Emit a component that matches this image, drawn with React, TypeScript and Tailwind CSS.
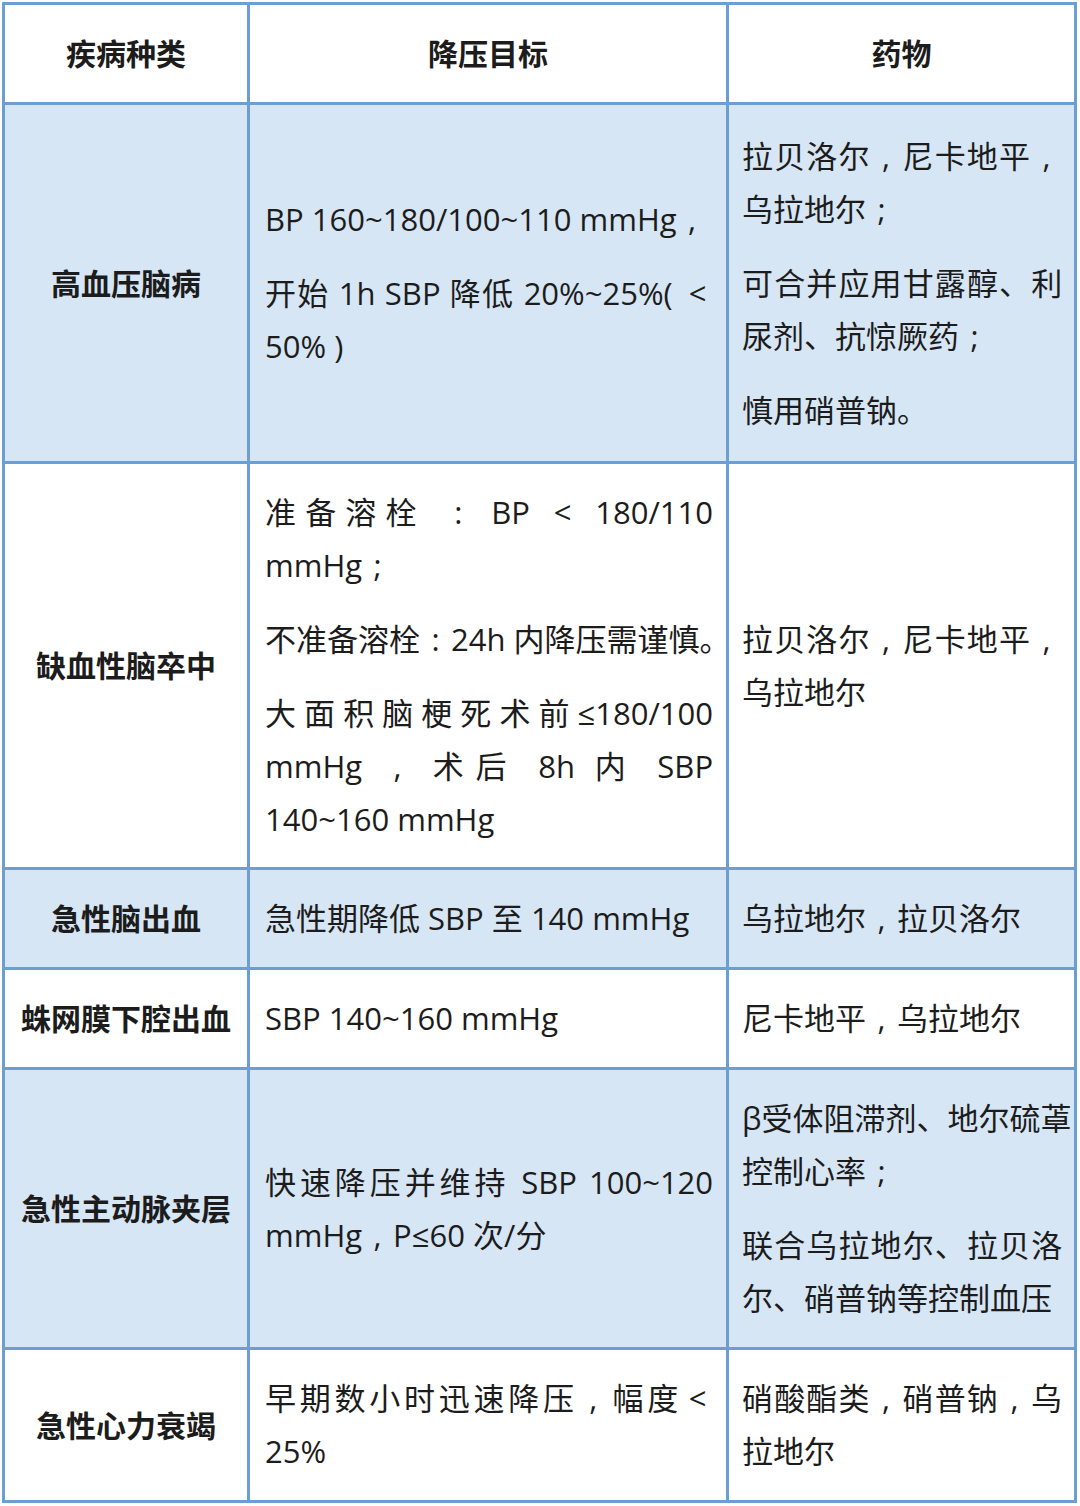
import React from 'react';

type Row = {
  h: number;
  shaded: boolean;
  name: string;
  target: string[][];
  drug: string[][];
};

const rows: Row[] = [
  {
    h: 359,
    shaded: true,
    name: '高血压脑病',
    target: [['BP 160~180/100~110 mmHg，'], ['开始 1h SBP 降低 20%~25%( ＜', '50% )']],
    drug: [['拉贝洛尔，尼卡地平，', '乌拉地尔；'], ['可合并应用甘露醇、利', '尿剂、抗惊厥药；'], ['慎用硝普钠。']],
  },
  {
    h: 406,
    shaded: false,
    name: '缺血性脑卒中',
    target: [
      ['准备溶栓 ： BP ＜ 180/110', 'mmHg；'],
      ['不准备溶栓：24h 内降压需谨慎。'],
      ['大面积脑梗死术前≤180/100', 'mmHg ， 术后 8h 内 SBP', '140~160 mmHg'],
    ],
    drug: [['拉贝洛尔，尼卡地平，', '乌拉地尔']],
  },
  {
    h: 100,
    shaded: true,
    name: '急性脑出血',
    target: [['急性期降低 SBP 至 140 mmHg']],
    drug: [['乌拉地尔，拉贝洛尔']],
  },
  {
    h: 100,
    shaded: false,
    name: '蛛网膜下腔出血',
    target: [['SBP 140~160 mmHg']],
    drug: [['尼卡地平，乌拉地尔']],
  },
  {
    h: 280,
    shaded: true,
    name: '急性主动脉夹层',
    target: [['快速降压并维持 SBP 100~120', 'mmHg，P≤60 次/分']],
    drug: [['β受体阻滞剂、地尔硫䓬', '控制心率；'], ['联合乌拉地尔、拉贝洛', '尔、硝普钠等控制血压']],
  },
  {
    h: 153,
    shaded: false,
    name: '急性心力衰竭',
    target: [['早期数小时迅速降压，幅度＜', '25%']],
    drug: [['硝酸酯类，硝普钠，乌', '拉地尔']],
  },
];

// fullwidth marks drawn centred in their em box, as in the source
const marks: Record<string, string> = { '，': ',', '；': ';', '：': ':', '＜': '<' };

function Line({ text }: { text: string }) {
  return (
    <>
      {Array.from(text).map((ch, i) =>
        marks[ch] ? (
          <span key={i} className="inline-block w-[1em] text-center [text-align-last:center]">
            {marks[ch]}
          </span>
        ) : (
          ch
        ),
      )}
    </>
  );
}

function Paras({ paras }: { paras: string[][] }) {
  return (
    <>
      {paras.map((lines, i) => (
        <div key={i} className={i > 0 ? 'mt-[21px]' : ''}>
          {lines.map((l, j) => (
            <div
              key={j}
              className={
                j < lines.length - 1
                  ? 'whitespace-nowrap text-justify [text-align-last:justify]'
                  : 'whitespace-nowrap'
              }
            >
              <Line text={l} />
            </div>
          ))}
        </div>
      ))}
    </>
  );
}

export default function App() {
  return (
    <div
      className="w-[1080px] h-[1506px] bg-white pl-[2px] pt-[2px] text-[#1c1c1c]"
      style={{ fontFamily: '"Open Sans", "Noto Sans CJK SC", sans-serif' }}
    >
      <div className="w-[1075px] border-l-[3px] border-t-[3px] border-[#6b9fd3]">
        <div className="flex h-[100px] bg-white text-[30px] font-bold">
          <div className="w-[245px] flex items-center justify-center border-r-[3px] border-b-[3px] border-[#6b9fd3]">疾病种类</div>
          <div className="w-[479px] flex items-center justify-center border-r-[3px] border-b-[3px] border-[#6b9fd3]">降压目标</div>
          <div className="w-[348px] flex items-center justify-center border-r-[3px] border-b-[3px] border-[#6b9fd3]">药物</div>
        </div>
        {rows.map((r) => (
          <div
            key={r.name}
            className={`flex text-[31px] leading-[53px] ${r.shaded ? 'bg-[#d7e6f5]' : 'bg-white'}`}
            style={{ height: r.h }}
          >
            <div className="w-[245px] flex items-center justify-center border-r-[3px] border-b-[3px] border-[#6b9fd3] text-[30px] font-bold whitespace-nowrap">
              {r.name}
            </div>
            <div className="w-[479px] flex flex-col justify-center pl-[15px] pr-[13px] border-r-[3px] border-b-[3px] border-[#6b9fd3]">
              <Paras paras={r.target} />
            </div>
            <div className="w-[348px] flex flex-col justify-center pl-[13px] pr-[12px] border-r-[3px] border-b-[3px] border-[#6b9fd3]">
              <Paras paras={r.drug} />
            </div>
          </div>
        ))}
      </div>
    </div>
  );
}
